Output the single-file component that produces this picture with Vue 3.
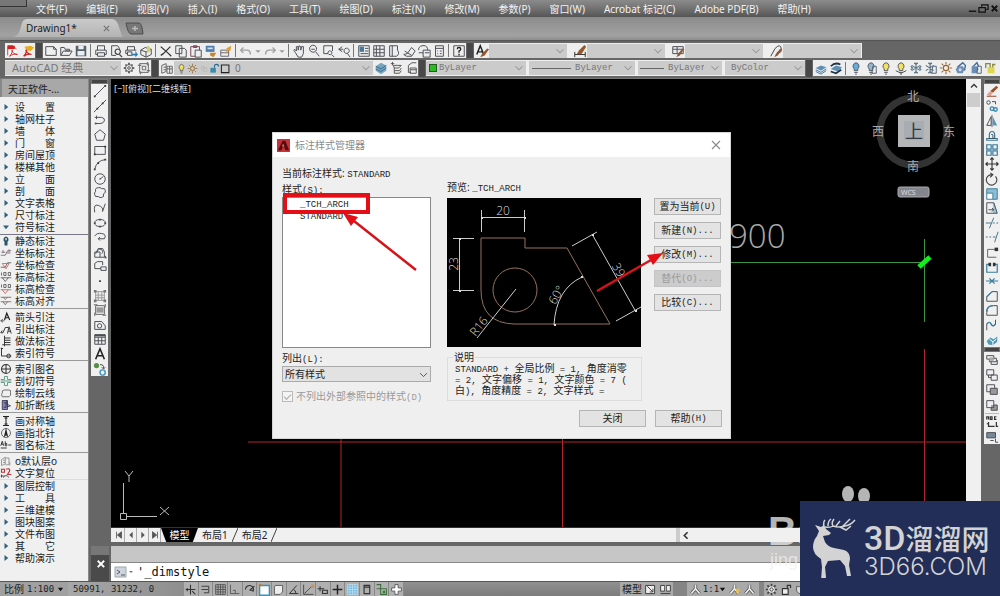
<script setup>
import { ref } from 'vue'

const s = (d, c = '#4a4f55', w = 1.1) => `<path d="${d}" fill="none" stroke="${c}" stroke-width="${w}"/>`
const f = (d, c = '#4a4f55') => `<path d="${d}" fill="${c}"/>`
const bulb = (c, e = '#556') => f('M8 2a4 4 0 0 0-2 7v2h4V9a4 4 0 0 0-2-7z', c) + s('M8 2a4 4 0 0 0-2 7v2h4V9a4 4 0 0 0-2-7zM6 13h4M7 15h2', e)
const page = s('M10 6h4v8h-5z', '#567')
const layers = f('M2 8l6-3 6 2-6 4z', '#5d8fb5') + s('M2 10l6 3 6-4M2 12l6 3 6-4', '#44769c')
const sheets = s('M2 3h8v4H2zM5 7v3h8V6h-3M7 10v3h7V8')
const pencil = f('M13 5l2 1-5 7-4 2 2-4z', '#8c5a36')

const icons = {
  pdf: f('M2 2h6l4 4v8H2z', '#fff') + s('M2 13V2h6l4 4', '#c33') + f('M2 2h8v4H2z', '#c22') + s('M4 14c3-3 4-7 3-7s0 4 6 5c-3-1-6 0-9 2', '#c22'),
  pdfc: f('M4 3l7-1 4 2-4 4-5-1z', '#e9ac1c') + s('M3 14c3-3 4-7 3-7s0 4 6 5c-3-1-6 0-9 2', '#c22', 1.4),
  new: s('M2 13V3h9l3 3v7zM11 3v3h3'),
  open: s('M2 13V4h4l1 2h5v2M2 13l3-5h10l-3 5zM7 8h5'),
  save: f('M2 2h12v12H2z', '#56606a') + f('M5 2h6v4H5zM4 8h8v5H4z', '#e8eef4'),
  print: s('M4 7V2h8v5M4 12H2V7h12v5h-2M4 10h8v4H4z'),
  preview: s('M8 13H3V2h7l2 3v2') + s('M7 9a3 3 0 1 1 5 2 3 3 0 0 1-5-2M12 12l3 3', '#444', 1.4),
  plot: s('M4 7V3h8v4M4 11H2V7h12M4 9h5v4H4z') + f('M9 11h4V8l3 4-3 3v-2H9z', '#2b7fb2'),
  globe: s('M2 7l5-3 7 2v6l-6 3-6-3zM2 7l6 2 6-3M8 9v6') + f('M9 2a4 4 0 1 1 0 8z', '#d5cf74'),
  cut: s('M2 3l9 8M13 3L5 11M2 13l3-2M11 11l3 3', '#333', 1.5),
  copy: s('M2 2h7v9H2zM6 5h6l2 2v8H6z'),
  paste: s('M2 3h10v11H2zM5 2h4v2H5z', '#745') + f('M7 7h7v8H7z', '#eee') + s('M7 7h7v8H7z'),
  match: f('M2 2h10v7H2z', '#4f7dac') + f('M4 4h6v2H4z', '#cde') + f('M7 10h7l-3 5-4-2z', '#c8872f'),
  edit: s('M2 7h9v7H2zM2 10h9', '#667') + f('M8 5l6-3-1 6-2-1-3 4-1-1 3-4z', '#dda02c'),
  undo: s('M5 4L2 7l3 3M2 7h7q4 0 4 5', '#a2a2a2', 1.6),
  redo: s('M11 4l3 3-3 3M14 7H7q-4 0-4 5', '#a2a2a2', 1.6),
  caret: f('M5 7h6l-3 3z', '#999'),
  pan: s('M4 10L2 7l1-1 2 2V3l2 0v4l1-5 2 1v4l1-4h2v8l-2 4H7z'),
  zoom: s('M3 6a4 4 0 1 1 7 2 4 4 0 0 1-7-2M10 9l4 5M5 6h4'),
  zoomwin: s('M2 2h10v6M2 2v9h5M7 9a2 2 0 1 1 4 2 2 2 0 0 1-4-2M11 12l3 3'),
  zoomprev: s('M6 3L2 6l4 3M2 6h5M8 8a3 3 0 1 1 5 2 3 3 0 0 1-5-2M12 11l3 4'),
  props: s('M2 2h12v12H2zM9 5h4M9 8h4M4 11h9') + f('M3 3h5v6H3z', '#49789f'),
  design: s('M2 2h12v12H2zM5 2v12M9 2v12M2 6h12M2 10h12'),
  palette: s('M3 2h9v5M3 2v12h5M6 2v12M12 7q3 4-1 7H8'),
  markup: s('M2 12l4-1 5-7 4 4-4 6H5zM3 8l8 5'),
  sheet: s('M2 7a5 4 0 0 1 10-2v2M7 7h8v8H7zM2 10h5M9 10h5'),
  calc: s('M4 2h9v12H4zM4 5h9M6 8h1M9 8h2M6 11h1M9 11h2'),
  help: s('M2 2h12v12H2z') + s('M6 6q0-2 2-2t2 2q0 1-2 2v2M8 11v2', '#222', 1.5),
  textstyle: s('M2 12L6 2l4 10M3 9h6', '#222', 1.7) + f('M14 5l2 1-5 7-5 2 2-4z', '#94582c'),
  dimstyle: s('M2 12h12M2 9v6M14 9v6', '#333') + f('M13 1l2 2-5 8-6 1 3-5z', '#94582c'),
  tablestyle: s('M2 3h12v8H2zM2 6h12M7 3v8') + pencil,
  mleader: s('M2 14l5-9q6-6 7 0t-5 5', '#444') + pencil,
  gear: s('M8 2v2M8 12v2M2 8h2M12 8h2M4 4l1 1M11 11l1 1M12 4l-1 1M5 11l-1 1', '#555', 2) + s('M4 8a4 4 0 1 1 8 0 4 4 0 0 1-8 0M6.500 8a1.500 1.500 0 1 1 3 0 1.500 1.500 0 0 1-3 0', '#555'),
  wsave: s('M3 3h10v10H3zM6 6h4v4H6z', '#666') + s('M1 5h4M11 11h4M12 1v4M4 12v3', '#777', 1.6),
  layerprop: s('M2 5l5-2v9l-5 2zM4 7h3M4 10h3M8 6h6v8H8zM8 9h6M11 6v8', '#666'),
  bulb: bulb('#f3e25d'), bulbblue: bulb('#61aedb'), bulbgrey: bulb('#8fb8d0') + page,
  bulblayer: bulb('#f3e25d') + s('M2 11l6 3 6-3'),
  sun: s('M8 1v3M8 12v3M1 8h3M12 8h3M3 3l2 2M11 11l2 2M13 3l-2 2M5 11l-2 2', '#987443', 1.3) + s('M5 8a3 3 0 1 1 6 0 3 3 0 0 1-6 0', '#98642c', 1.3),
  freeze: s('M5 5h4v4H5zM8 7h5v5H8z', '#b9b9b9'),
  snow: s('M8 2v12M3 5l10 6M13 5L3 11M6 2l2 2 2-2M6 14l2-2 2 2M2 6l2 2-2 2M14 6l-2 2 2 2', '#567083', 1.3),
  snowpage: s('M7 2v12M2 5l9 6M11 5L2 11M5 2l2 2 2-2M5 14l2-2 2 2', '#567083', 1.3) + page,
  lockopen: f('M2 7h8v7H2z', '#3c89ae') + s('M8 7V4q0-2 3-2t3 3', '#286c91', 1.6),
  lock: s('M4 7l6-5 3 3-1 6', '#446a94', 1.6) + f('M4 6h6l2 3-2 5H4L2 10z', '#6c8eb5') + s('M6 9h2v2H6z', '#eef'),
  lockpage: s('M4 7l5-5 2 4', '#446a94', 1.6) + f('M3 6h6l2 3-2 5H3z', '#6c8eb5') + page,
  lockyellow: f('M4 7h8v7H4z', '#ded74f') + s('M2 8V3h5v4M10 7V4h3', '#898635', 1.5),
  square: s('M2 3h11v11H2z', '#222', 1.5),
  layers: layers,
  laystack: f('M2 6l6-4 6 3v6l-6 4-6-4z', '#78a6c0') + s('M2 6l6 3 6-4M2 9l6 3 6-4', '#356c8e'),
  laymatch: s('M2 3h4M4 1v4M5 5h9l-3 3H6zM6 8v3h6l2-3M6 11v3h6l2-3', '#555'),
  layprev: s('M5 5l4-3h5M5 5v8h3M7 8h7v6H7zM7 10h7', '#555'),
  laydark: f('M2 9l6-4 7 2-5 5z', '#5d8fb5') + s('M2 6q5-5 11-2M2 12l6 2 6-4', '#234', 2),
  line: s('M2 14L14 2') + f('M1 13h2v2H1zM13 1h2v2h-2z', '#333'),
  xline: s('M1 15L15 1') + f('M4 10h2v2H4zM10 4h2v2h-2z', '#333'),
  pline: s('M2 5h8q4 1 3 4t-5 3H3M4 3v4') + f('M2 11h2v2H2z'),
  polygon: s('M8 2l6 5-2 7H4L2 7z'),
  rect: s('M2 4h12v9H2z') + f('M1 12h2v2H1zM13 3h2v2h-2z', '#333'),
  arc: s('M2 14Q4 4 14 3') + f('M1 13h2v2H1zM5 6h2v2H5zM13 2h2v2h-2z', '#333'),
  circle: s('M2 8a6 6 0 1 1 12 0 6 6 0 0 1-12 0M8 8l4-3M7 8h2'),
  cloud: s('M3 6q-1-4 3-4 2-1 4 1 4-1 4 2 1 3-2 4 1 4-2 4-2 1-4-1-4 1-4-2-1-2 1-4z'),
  spline: s('M2 13Q0 3 6 5t5 6 3-8'),
  ellipse: s('M2 8q0-4 6-4t6 4-6 4-6-4') + f('M7 3h2v2H7zM7 11h2v2H7zM1 7h2v2H1zM13 7h2v2h-2z'),
  earc: s('M2 7q2-4 8-3t3 6H6M8 8l-2 2 2 2'),
  insert: s('M3 10l3-6h5l2 4v6H8M2 8v6h6V8zM5 8a3 3 0 1 1 5 2') + f('M14 12l2 3h-3z'),
  block: s('M2 11V5l3-2h6v4M2 11h7M9 9h6v4H9z'),
  point: f('M7 7h2v2H7z', '#333'),
  hatch: s('M3 3h10v10H3zM3 7h10M3 10h10M6 3v10M10 3v10', '#999') + f('M1 1h3v3H1zM12 1h3v3h-3zM1 12h3v3H1zM12 12h3v3h-3z', '#777'),
  gradient: f('M4 5h8v6H4z', '#999') + s('M3 3h10v10H3zM1 2h4M11 14h4M2 11v4M14 1v4', '#666'),
  region: s('M2 13V4h8l4 5v4zM5 9a2 2 0 1 1 5 0 2 2 0 0 1-5 0'),
  table: s('M2 3h12v11H2zM2 6h12M2 10h12M6 6v8M10 6v8') + f('M2 3h12v2H2z'),
  mtext: s('M3 14L8 2l5 12M5 10h6', '#222', 1.8),
  addsel: f('M1 4a3 3 0 1 1 6 0 3 3 0 0 1-6 0', '#578e47') + s('M8 3q5 0 4 4M10 6l2 2 2-2', '#444') + s('M8 12a3 3 0 1 1 6 0 3 3 0 0 1-6 0', '#4796bd', 1.7),
  erase: f('M13 2l2 2-6 6-3-2z', '#94532e') + f('M6 8l3 2-3 4-4-2z', '#dfa398') + s('M2 14h11', '#9a3f2e'),
  copy2: s('M2 4a2 2 0 1 1 4 0 2 2 0 0 1-4 0M8 3h4v3') + s('M6 11a2 2 0 1 1 4 0 2 2 0 0 1-4 0M10 12a2 2 0 1 1 4 0 2 2 0 0 1-4 0', '#3987ae', 1.5),
  mirror: s('M7 3v10H2z') + f('M9 3v10h5z', '#589ab7') + s('M8 1v14', '#567'),
  offset: s('M2 12h3V8q0-4 3-4t3 4v4h3v2H2z', '#397e9f', 1.4) + s('M4 12h8M7 8q1-2 2 0v4'),
  array: s('M2 2h5v5H2zM9 2h5v5H9zM2 9h5v5H2zM9 9h5v5H9z', '#397e9f', 1.4),
  move: s('M8 1v14M1 8h14M6 3l2-2 2 2M6 13l2 2 2-2M3 6L1 8l2 2M13 6l2 2-2 2', '#333', 1.3),
  rotate: s('M8 3a6 6 0 1 0 4 2M6 1l3 2-3 3', '#444', 1.3),
  scale: f('M2 2h12v12H2z', '#8dbdd2') + f('M2 7h7v7H2z', '#fff') + s('M2 2h12v12H2zM2 7h7v7', '#397e9f'),
  stretch: f('M9 2h2l3 12H9z', '#9cc7d9') + s('M2 2h8l4 12H2zM4 10h6M8 8l2 2-2 2'),
  trim: s('M1 8h6M9 8h2M13 8h2M5 14l5-12', '#467389'),
  extend: s('M1 8h2M5 8h2M9 8h3M11 14l4-12', '#467389'),
  breakpt: s('M13 5H3v9h10', '#567') + f('M11 3h4v4h-4z', '#333'),
  break: s('M5 5H2v9h12V5h-3', '#397e9f', 1.4) + f('M4 3h3v4H4zM9 3h3v4H9z', '#333'),
  join: s('M1 8h14M5 5l3 3-3 3M11 5L8 8l3 3', '#397e9f', 1.4),
  chamfer: s('M2 14V9l6-6h6v11z') + s('M2 9l6-6', '#397e9f', 1.6),
  fillet: s('M2 14v-3q0-8 8-8h4v11z') + s('M2 10q0-7 7-7', '#397e9f', 1.6),
  blend: s('M2 14V7q3-4 5 0t5 0V2') + s('M2 7q3-4 5 0t5 0', '#397e9f', 1.6),
  explode: f('M2 9l4-4 4 2 4-3 0 6-5 4-5-1z', '#4e9bb8') + s('M5 7l4 3 4-3M9 10v4', '#fff'),
  order1: sheets + f('M5 5h5v4H5z', '#aaa'),
  order2: s('M2 2h8v6H2zM7 8h7v6H7zM4 8v3h3'),
  order3: s('M2 2h9v8H2z') + f('M6 6h8v7H6z', '#999') + s('M6 6h8v7H6z'),
  order4: f('M7 8h7v6H7z', '#999') + s('M2 3h8v8H2zM10 8h4v6H7v-3'),
  abc: s('M2 5V2h2v3M6 2h2v3H6zM13 2h-2v3h2M4 8v5h7M4 10H2M13 8v5h2', '#333', 1.4),
  orderh: f('M2 3h10v6H2z', '#789') + s('M2 3h10v6H2zM6 12h4M12 10v4h3'),
  light: f('M8 2a4 4 0 0 0-2 7v5h4V9a4 4 0 0 0-2-7z', '#275565') + f('M7 4h2v3H7z', '#cde'),
  coord: s('M1 11h6l3-6h5M2 7h5M4 4v4M9 8h5M12 3v4', '#78636e'),
  coordr: s('M1 11h6l3-6h5', '#556') + s('M3 6h9l-4 7z', '#c86259'),
  level: s('M2 2v4M5 2h3v4H5zM11 2h3v4h-3zM1 9h14M3 9l4 5 4-5', '#555'),
  levelr: s('M2 2v4M5 2h3v4H5zM11 2h3v4h-3z', '#555') + s('M1 9h14M3 9l4 5 4-5', '#b46257'),
  levela: s('M1 3h14M4 3l3 3 3-3M1 9h14M4 9l3 4 3-4', '#775f59'),
  arrowA: s('M1 13h5M4 11l-3 2 3 2') + s('M6 12l3-9 4 9M7 9h5', '#222', 1.6),
  lead: s('M1 13h3l3-7h4M3 10l-2 3M10 14l2-9 3 9M11 11h3', '#333', 1.3),
  method: s('M6 1v14M6 4h8M6 7h8M6 10h8M3 13h11', '#333', 1.3),
  indexs: s('M2 1v11h7M1 2h3M9 12a2 2 0 1 1 5 0 2 2 0 0 1-5 0M9 12h6', '#333', 1.3),
  indexn: s('M2 8a6 6 0 1 1 12 0 6 6 0 0 1-12 0M8 2v12M2 8h12', '#333', 1.4),
  section: s('M1 6h5V2h4v4h5M1 10h5v4h4v-4h5M1 8h14', '#4d8d77'),
  rcloud: s('M3 13q-2-3 0-5-1-4 3-4h6q3 0 2 3 1 5-2 6z', '#555'),
  breakl: f('M3 2h7v12H3z', '#8486b8') + s('M3 2h7v12H3zM9 2v5l5 2-5 2M5 5h3v6H5', '#334'),
  axis: s('M4 2h8M8 2v12M4 14h8M6 4h4M6 12h4', '#222', 1.4),
  north: s('M2 8a6 6 0 1 1 12 0 6 6 0 0 1-12 0') + f('M8 1l3 13-3-3-3 3z', '#222'),
  imgname: s('M1 9l2-6 2 6M2 7h2M7 3v6h2V6H7M1 12h8M11 8h4', '#333', 1.3),
  deflayer: s('M2 6l5-3v9l-5 2zM7 4h5v9H7M4 7h3M4 10h3M13 9v5', '#888'),
  reset: s('M2 3h4v4H2zM8 3q5-2 5 2l-3 5h5', '#b33', 1.5) + s('M1 12h5M2 10v4M4 14q4-5 8 0', '#333'),
  infer: s('M8 2v12M2 8h12M4 6v4M10 10l4 4', '#333', 1.3),
  snap: s('M3 4h9v8H6M3 8h8', '#333'),
  grid: s('M2 2h12v12H2zM5 2v12M8 2v12M11 2v12M2 5h12M2 8h12M2 11h12', '#444', 0.9),
  ortho: s('M3 2v11h11M6 9h3v4', '#555'),
  polar: s('M3 8a5 5 0 1 1 9 3M8 9l6-5M8 9h5', '#333', 1.3),
  osnap: f('M2 3h12v12H2z', '#fff') + s('M2 3h12v12H2z', '#3b93b5', 1.7) + f('M1 1h3v3H1z', '#c72'),
  osnap3: f('M4 3h9v8l-3 3H3V5z', '#eee') + s('M4 3h9v8l-3 3H3V5z', '#555'),
  angle: s('M12 3L3 13h11M8 8q3 1 3 5', '#333', 1.2),
  ducs: s('M2 2v12h12M3 13L12 4', '#444') + f('M11 2h4v4h-4z', '#d7903d'),
  dyn: s('M2 7h8M5 4v6M8 9h6v4H8z', '#333', 1.3),
  lwt: s('M2 8h12M8 2v12', '#222', 1.8),
  tpy: f('M2 2h12v12H2z', '#73b8df') + s('M2 2h12v12H2zM5 2v12M8 2v12M11 2v12M2 5h12M2 8h12M2 11h12', '#c4e6f8', 0.8),
  qp: s('M5 3h7v10H5zM5 5h7', '#333', 1.4),
  sc: f('M8 8h6v6H8z', '#b6dcae') + s('M2 2h5v5H2M7 7h7v7H7zM10 10h2v2h-2z', '#3e6b3e', 1.3),
  am: f('M6 2h4v4h4v4h-4v4H6v-4H2V6h4z', '#fff') + s('M6 2h4v4h4v4h-4v4H6v-4H2V6h4z', '#555'),
  model: f('M2 3h11v10H2z', '#eee') + s('M2 3h11v10H2zM4 4l7 7M11 7v4H7', '#333'),
  layout: f('M2 3h12v7H2z', '#eee') + s('M2 3h5v7H2zM9 3h5v7H9zM2 13h12', '#333'),
  anno: s('M8 2v5L3 13M8 7l5 6', '#555', 4) + s('M8 2v5L3 13M8 7l5 6', '#eee', 2),
  annoy: s('M8 2v5L3 13M8 7l5 6', '#666', 4) + s('M8 2v5L3 13M8 7l5 6', '#eee', 2) + f('M10 7h4v5h-4z', '#e5c04d'),
  lockst: f('M3 7h7v7H3z', '#eee') + s('M3 7h7v7H3zM9 7V3h4v3', '#333', 1.4),
  gearw: s('M8 1v14M1 8h14M3 3l10 10M13 3L3 13', '#444', 2) + f('M4 8a4 4 0 1 1 8 0 4 4 0 0 1-8 0', '#eee') + s('M6 8a2 2 0 1 1 4 0 2 2 0 0 1-4 0', '#333'),
  globew: f('M2 4q8 2 11-2v8q-6 7-11 0z', '#ddd') + s('M2 4q8 2 11-2v8q-6 7-11 0z', '#555'),
  chev: s('M4 6l4 4 4-4', '#969696', 1.2),
  chevdark: s('M3 6l5 5 5-5', '#444', 1.3),
  chevup: s('M4 10l4-4 4 4', '#333', 1.7),
  close: s('M4 4l8 8M12 4l-8 8', '#8a8a8a', 1.1),
  tri: f('M6 4l5 4-5 4z', '#31617c'), trid: f('M4 6h8l-4 5z', '#31617c')
}

const menus = ['文件(F)', '编辑(E)', '视图(V)', '插入(I)', '格式(O)', '工具(T)', '绘图(D)', '标注(N)', '修改(M)', '参数(P)', '窗口(W)', 'Acrobat 标记(C)', 'Adobe PDF(B)', '帮助(H)']
const stdBar = ['new', 'open', 'save', '|', 'print', 'preview', 'plot', 'globe', '|', 'cut', 'copy', 'paste', 'match', 'edit', '|', 'undo', 'caret', 'redo', 'caret', '|', 'pan', 'zoom', 'zoomwin', 'zoomprev', '|', 'props', 'design', 'palette', 'markup', 'sheet', 'calc', '|', 'help']
const styleBar = ['textstyle', 'dimstyle', 'tablestyle', 'mleader']
const layerBar = ['layers', 'laydark', '|', 'bulbblue', 'bulbgrey', 'bulb', 'bulblayer', 'snow', 'snowpage', 'sun', 'lock', 'lockpage', 'lockyellow']
const drawBar = ['line', 'xline', 'pline', 'polygon', 'rect', 'arc', 'circle', 'cloud', 'spline', 'ellipse', 'earc', 'insert', 'block', 'point', 'hatch', 'gradient', 'region', 'table', 'mtext', 'addsel']
const modifyBar = ['erase', 'copy2', 'mirror', 'offset', 'array', 'move', 'rotate', 'scale', 'stretch', 'trim', 'extend', 'breakpt', 'break', 'join', 'chamfer', 'fillet', 'blend', 'explode']
const orderBar = ['order1', 'order2', 'order3', 'order4', '|', 'abc', 'orderh']
const statusBar = ['infer', 'snap', 'grid', 'ortho', 'polar', 'osnap', 'osnap3', 'angle', 'ducs', 'dyn', 'lwt', 'tpy', 'qp', 'sc', 'am']
const groups = [
  [['tri', '设　　置'], ['tri', '轴网柱子'], ['tri', '墙　　体'], ['tri', '门　　窗'], ['tri', '房间屋顶'], ['tri', '楼梯其他'], ['tri', '立　　面'], ['tri', '剖　　面'], ['tri', '文字表格'], ['tri', '尺寸标注'], ['trid', '符号标注']],
  [['light', '静态标注'], ['coord', '坐标标注'], ['coordr', '坐标检查'], ['level', '标高标注'], ['levelr', '标高检查'], ['levela', '标高对齐']],
  [['arrowA', '箭头引注'], ['lead', '引出标注'], ['method', '做法标注'], ['indexs', '索引符号']],
  [['indexn', '索引图名'], ['section', '剖切符号'], ['rcloud', '绘制云线'], ['breakl', '加折断线']],
  [['axis', '画对称轴'], ['north', '画指北针'], ['imgname', '图名标注']],
  [['deflayer', 'o默认层o'], ['reset', '文字复位']],
  [['tri', '图层控制'], ['tri', '工　　具'], ['tri', '三维建模'], ['tri', '图块图案'], ['tri', '文件布图'], ['tri', '其　　它'], ['tri', '帮助演示']]
]
const sideButtons = [['置为当前', '(U)'], ['新建', '(N)...'], ['修改', '(M)...'], ['替代', '(O)...'], ['比较', '(C)...']]
const picked = ref('')
const command = ref("'_dimstyle")
</script>

<template>
  <div class="app">
    <nav class="menubar">
      <span class="appbtn"></span>
      <a v-for="m in menus" :key="m" href="#">{{ m }}</a>
      <div class="winctl">
        <button aria-label="最小化"><svg viewBox="0 0 12 12"><path d="M2 9h8" stroke="#111" stroke-width="1.500" /></svg></button>
        <button aria-label="还原"><svg viewBox="0 0 12 12"><path d="M4 4V2h7v5H9M1 5h7v5H1z" fill="none" stroke="#111" stroke-width="1.300" /></svg></button>
        <button aria-label="关闭窗口"><svg viewBox="0 0 12 12"><path d="M3 3l6 6M9 3L3 9" stroke="#111" stroke-width="2" /></svg></button>
      </div>
    </nav>

    <div class="doctabs">
      <button class="doctab">
        <svg class="shape" viewBox="0 0 110 18" preserveAspectRatio="none"><defs><linearGradient id="tg" x2="0" y2="1"><stop stop-color="#cacaca" /><stop offset="1" stop-color="#b4b4b4" /></linearGradient></defs><path d="M0 18Q5 17 7 11L9 4Q10 0 15 0H98Q103 0 105 5L108 14Q109 18 110 18z" fill="url(#tg)" /></svg>
        <span>Drawing1*</span>
        <svg class="x" viewBox="0 0 8 8"><path d="M1 1l6 6M7 1L1 7" stroke="#777" stroke-width="1.500" /></svg>
      </button>
      <button class="addtab" aria-label="新建图形"><svg viewBox="0 0 19 13"><path d="M1 1h13q3 0 4 11H6Q3 12 1 1z" fill="#777" stroke="#4d4d4d" /><path d="M10 4v5M7 6.500h6" stroke="#bbb" stroke-width="1.500" /></svg></button>
    </div>

    <div class="toolrow">
      <div class="strip"><button v-for="n in ['pdf', 'pdfc']" :key="n" :aria-label="n"><svg class="ic" viewBox="0 0 16 16" v-html="icons[n]" /></button></div>
      <i class="grip"></i>
      <div class="strip std">
        <template v-for="(n, i) in stdBar" :key="i">
          <i v-if="n === '|'" class="sep"></i>
          <button v-else :class="{ narrow: n === 'caret' }" :aria-label="n"><svg class="ic" viewBox="0 0 16 16" v-html="icons[n]" /></button>
        </template>
      </div>
      <i class="grip"></i>
      <div class="strip">
        <template v-for="n in styleBar" :key="n">
          <button :aria-label="n"><svg class="ic" viewBox="0 0 16 16" v-html="icons[n]" /></button>
          <div class="combo style"><select :aria-label="n + ' 样式'"><option></option></select><svg class="ic" viewBox="0 0 16 16" v-html="icons.chev" /></div>
        </template>
      </div>
    </div>

    <div class="toolrow second">
      <div class="strip">
        <div class="combo work"><select aria-label="工作空间"><option>AutoCAD 经典</option></select><svg class="ic" viewBox="0 0 16 16" v-html="icons.chev" /></div>
        <button v-for="n in ['gear', 'wsave']" :key="n" :aria-label="n"><svg class="ic" viewBox="0 0 16 16" v-html="icons[n]" /></button>
      </div>
      <i class="grip"></i>
      <div class="strip">
        <button aria-label="图层特性"><svg class="ic" viewBox="0 0 16 16" v-html="icons.layerprop" /></button>
        <div class="combo layer">
          <svg v-for="n in ['bulb', 'sun', 'freeze', 'lockopen', 'square']" :key="n" class="small" viewBox="0 0 16 16" v-html="icons[n]" />
          <select aria-label="图层"><option>0</option></select><svg class="ic" viewBox="0 0 16 16" v-html="icons.chev" />
        </div>
        <button v-for="n in ['laystack', 'laymatch', 'layprev']" :key="n" :aria-label="n"><svg class="ic" viewBox="0 0 16 16" v-html="icons[n]" /></button>
      </div>
      <i class="grip"></i>
      <div class="strip prop">
        <div class="combo bycol"><span class="green"></span><select aria-label="颜色"><option>ByLayer</option></select><svg class="ic" viewBox="0 0 16 16" v-html="icons.chev" /></div>
        <div class="combo ltype"><span class="rule"></span><select aria-label="线型"><option>ByLayer</option></select><svg class="ic" viewBox="0 0 16 16" v-html="icons.chev" /></div>
        <div class="combo lw"><span class="rule short"></span><select aria-label="线宽"><option>ByLayer</option></select><svg class="ic" viewBox="0 0 16 16" v-html="icons.chev" /></div>
        <div class="combo pstyle"><select aria-label="打印样式"><option>ByColor</option></select><svg class="ic" viewBox="0 0 16 16" v-html="icons.chev" /></div>
      </div>
      <i class="grip"></i>
      <div class="strip last">
        <template v-for="(n, i) in layerBar" :key="i">
          <i v-if="n === '|'" class="sep"></i>
          <button v-else :aria-label="n"><svg class="ic" viewBox="0 0 16 16" v-html="icons[n]" /></button>
        </template>
      </div>
    </div>

    <div class="work-area">
      <aside class="side">
        <h2>天正软件-...</h2>
        <div class="sidelist">
          <ul v-for="(g, i) in groups" :key="i">
            <li v-for="it in g" :key="it[1]"><a href="#"><svg viewBox="0 0 16 16" v-html="icons[it[0]]" /><span>{{ it[1] }}</span></a></li>
          </ul>
        </div>
      </aside>

      <div class="main">
        <div class="upper">
          <div class="vbar draw">
            <i class="hgrip"></i>
            <div class="cells twenty"><button v-for="n in drawBar" :key="n" :aria-label="n"><svg class="ic" viewBox="0 0 16 16" v-html="icons[n]" /></button></div>
          </div>

          <div class="center">
            <div class="view">
              <div class="canvas">
                <svg class="drawing" viewBox="111 79 855 448" preserveAspectRatio="xMinYMin meet">
                  <text x="114" y="92" class="vlabel">[−][俯视][二维线框]</text>
                  <g stroke="#b0262c" fill="none"><path d="M248 442H966M341 430V527M562.500 430V527M924.500 349V527" /></g>
                  <path d="M700 262.500H924M924.500 239V322" stroke="#3c9440" />
                  <path d="M919 267l11-10" stroke="#11f01c" stroke-width="5" />
                  <text x="729" y="248" class="big">900</text>
                  <g stroke="#bbb" fill="none"><path d="M123.500 483V513M127 516.500H157M120.500 513.500h6v6h-6zM125 471l4 5 4-5M129 476v6M160 507l9 8M169 507l-9 8" /></g>
                  <circle cx="913.500" cy="131.500" r="33.500" fill="none" stroke="#333" stroke-width="7" />
                  <path d="M898 115h32v32h-32z" fill="#b4b6b8" /><path d="M904 121h20v19h-20z" fill="#a7adb3" />
                  <g class="cube"><text x="913" y="101">北</text><text x="878" y="136">西</text><text x="949" y="136">东</text><text x="913" y="171">南</text></g>
                  <text x="914" y="138" class="up">上</text>
                  <rect x="898" y="187" width="31" height="10" rx="2" fill="#85858f" stroke="#aaa" />
                  <text x="901" y="195" class="wcs">WCS</text>
                </svg>

                <section class="dialog" role="dialog" aria-labelledby="dt">
                  <header>
                    <svg class="logo" viewBox="0 0 14 14"><path d="M0 0h14v14H0z" fill="#c5343a" /><path d="M1 12L6 2h3l4 10h-4l-1-3H6l-1 3z" fill="#5a0b10" /><path d="M6.500 5L8 8H5.500z" fill="#e88" /></svg>
                    <h1 id="dt">标注样式管理器</h1>
                    <button aria-label="关闭对话框"><svg viewBox="0 0 16 16" v-html="icons.close" /></button>
                  </header>
                  <div class="dbody">
                    <div class="col1">
                      <p>当前标注样式: <span class="m">STANDARD</span></p>
                      <label for="styles">样式<span class="m">(S):</span></label>
                      <select id="styles" v-model="picked" size="4"><option>_TCH_ARCH</option><option>STANDARD</option></select>
                      <label for="flt" class="lo">列出<span class="m">(L):</span></label>
                      <div class="filter"><select id="flt"><option>所有样式</option></select><svg viewBox="0 0 16 16" v-html="icons.chevdark" /></div>
                      <label class="chk"><input type="checkbox" checked disabled><span>不列出外部参照中的样式<span class="m">(D)</span></span></label>
                    </div>
                    <div class="col2">
                      <p>预览: <span class="m">_TCH_ARCH</span></p>
                      <svg class="preview" viewBox="447 198 194 149">
                        <path d="M447 198h194v149H447z" fill="#000" />
                        <g fill="none" stroke="#96705d"><path d="M481 238h44v10h42l43 76h-96q-33-1-33-34z" /><circle cx="515" cy="290" r="22" /></g>
                        <g fill="none" stroke="#ccc"><path d="M481 217.500h44M481.500 210v22M524.500 210v22M459.500 238v52M453 238.500h21M453 290.500h21M516 289l-39 49M592 234l44 78M572 246l25-14M616 321l25-14M582 277q-26 12-28 48" /></g>
                        <path d="M481 217h2v2h-2zM524 217h2v2h-2zM459 238h2v2h-2zM459 290h2v2h-2zM592 234h2v2h-2zM635 310h2v2h-2zM581 276h2v2h-2zM554 324h2v2h-2z" fill="#ddd" />
                        <g class="dim"><text x="503" y="215">20</text><text transform="translate(458 264) rotate(-90)">23</text><text transform="translate(560 297) rotate(-60)">60°</text><text transform="translate(615 272) rotate(60)">39</text><text transform="translate(482 329) rotate(-51)">R16</text></g>
                      </svg>
                      <fieldset><legend>说明</legend><p><span class="m">STANDARD + </span>全局比例<span class="m"> = 1, </span>角度消零<br><span class="m">= 2, </span>文字偏移<span class="m"> = 1, </span>文字颜色<span class="m"> = 7 (</span><br>白<span class="m">), </span>角度精度<span class="m"> = 2, </span>文字样式<span class="m"> =</span></p></fieldset>
                    </div>
                    <div class="col3"><button v-for="(b, i) in sideButtons" :key="i" :disabled="i === 3">{{ b[0] }}<span class="m">{{ b[1] }}</span></button></div>
                  </div>
                  <footer><button>关闭</button><button>帮助<span class="m">(H)</span></button></footer>
                </section>

                <svg class="marks" viewBox="111 79 855 448" preserveAspectRatio="xMinYMin meet">
                  <path d="M285 195h83v17h-83z" fill="none" stroke="#e30e16" stroke-width="4" />
                  <path d="M416 270l-62-49M597 291l54-31" stroke="#d5141a" stroke-width="2.500" />
                  <path d="M343 213l15 4-7 9zM663 253l-10 12-6-10z" fill="#e30e16" />
                </svg>
              </div>
              <div class="vscroll"><button aria-label="向上滚动"><svg viewBox="0 0 16 16" v-html="icons.chevup" /></button><i></i></div>
            </div>
            <div class="layouts">
              <div class="navs">
                <button aria-label="第一个"><svg viewBox="0 0 12 12"><path d="M3 2v8M9 2v8L4 6z" fill="#555" stroke="#555" /></svg></button>
                <button aria-label="上一个"><svg viewBox="0 0 12 12"><path d="M8 2v8L4 6z" fill="#555" /></svg></button>
                <button aria-label="下一个"><svg viewBox="0 0 12 12"><path d="M4 2v8l4-4z" fill="#555" /></svg></button>
                <button aria-label="最后一个"><svg viewBox="0 0 12 12"><path d="M9 2v8M3 2v8l5-4z" fill="#555" stroke="#555" /></svg></button>
              </div>
              <button class="ltab on">模型</button>
              <button class="ltab">布局1</button><svg class="slash" viewBox="0 0 6 14"><path d="M0 14L6 0" stroke="#444" /></svg>
              <button class="ltab">布局2</button><svg class="slash" viewBox="0 0 6 14"><path d="M0 14L6 0" stroke="#444" /></svg>
              <div class="hscroll"><button aria-label="向左滚动"><svg viewBox="0 0 12 12"><path d="M7 3L4 6l3 3" fill="none" stroke="#333" stroke-width="1.500" /></svg></button></div>
            </div>
          </div>

          <div class="vbar modify">
            <i class="hgrip"></i>
            <div class="cells eighteen"><button v-for="n in modifyBar" :key="n" :aria-label="n"><svg class="ic" viewBox="0 0 16 16" v-html="icons[n]" /></button></div>
            <i class="hgrip"></i>
            <div class="cells order">
              <template v-for="n in orderBar" :key="n"><i v-if="n === '|'" class="hsep"></i><button v-else :aria-label="n"><svg class="ic" viewBox="0 0 16 16" v-html="icons[n]" /></button></template>
            </div>
          </div>
        </div>

        <div class="command">
          <div class="handle"><i></i><button aria-label="关闭命令行"><svg viewBox="0 0 12 12"><path d="M3 3l7 7M10 3L3 10" stroke="#fff" stroke-width="2" /></svg></button></div>
          <div class="cmdbox">
            <div class="hist"></div>
            <label class="cmdline">
              <svg viewBox="0 0 20 12"><path d="M1 1h11v10H1z" fill="#cfd4dc" stroke="#9aa" /><path d="M3 4l3 2-3 2M7 9h4" fill="none" stroke="#556" /><path d="M15 5h4l-2 2z" fill="#777" /></svg>
              <input v-model="command" aria-label="命令">
            </label>
          </div>
        </div>
      </div>
    </div>

    <footer class="status">
      <button class="ratio">比例 <span>1:100</span><svg viewBox="0 0 8 8"><path d="M1 2h6L4 6z" fill="#111" /></svg></button>
      <span class="coords">50991, 31232, 0</span>
      <div class="sticons"><button v-for="n in statusBar" :key="n" :aria-label="n"><svg class="ic" viewBox="0 0 16 16" v-html="icons[n]" /></button></div>
      <div class="stright">
        <button class="txt">模型</button>
        <button v-for="n in ['model', 'layout']" :key="n" :aria-label="n"><svg class="ic" viewBox="0 0 16 16" v-html="icons[n]" /></button>
        <i class="gap"></i>
        <button class="scale"><svg class="ic" viewBox="0 0 16 16" v-html="icons.anno" /><span>1:1</span><svg class="tiny" viewBox="0 0 8 8"><path d="M1 2h6L4 6z" fill="#111" /></svg></button>
        <button v-for="n in ['annoy', 'anno']" :key="n" :aria-label="n"><svg class="ic" viewBox="0 0 16 16" v-html="icons[n]" /></button>
        <i class="gap small-gap"></i>
        <button v-for="n in ['gearw', 'lockst', 'globew']" :key="n" :aria-label="n"><svg class="ic" viewBox="0 0 16 16" v-html="icons[n]" /></button>
      </div>
    </footer>

    <div class="wm">
      <svg class="paw" viewBox="0 0 32 16"><ellipse cx="7" cy="8" rx="6" ry="8" fill="#b5b5b5" /><ellipse cx="23" cy="10" rx="6" ry="8" fill="#b5b5b5" /></svg>
      <b>Ba</b><span>jing</span>
    </div>
    <div class="brand">
      <svg class="deer" viewBox="0 0 46 60">
        <path d="M4 7l6 2 3-2 2 4 5 4-2 2-6 1 2 6q3 5 9 6l10 2q6 2 6 9l-1 6 2 11h-4l-2-10-5-6-12 1-3 6 1 10-1 4h-4l1-14-1-8Q2 36 2 29q0-6 4-11l2-5z" fill="#d3d3d3" />
        <path d="M13 9q-1-5 1-7M14 9q5 1 8-1 6 2 12 0 6-1 10-6M17 8q0-5 3-7M22 8q-2-3 1-7M25 8l4-5M31 9l5-5 3-3M29 9l6 3 5-4" fill="none" stroke="#d3d3d3" stroke-width="1.500" />
      </svg>
      <div class="names"><div class="n1"><span>3D</span>溜溜网</div><div class="n2">3D66.COM</div></div>
    </div>
  </div>
</template>

<style>
body { margin: 0; background: #666; }
</style>

<style scoped>
* { box-sizing: border-box; }
.app { position: relative; min-height: 100vh; display: flex; flex-direction: column; overflow: hidden; background: #666; color: #222; font: 10px/12px "Noto Sans", "Noto Sans CJK SC", sans-serif; }
button, select, input { font: inherit; color: inherit; margin: 0; padding: 0; border: 0; background: none; border-radius: 0; appearance: none; outline: 0; }
h1, h2, p, ul { margin: 0; padding: 0; font-weight: normal; font-size: 10px; list-style: none; }
a { color: inherit; text-decoration: none; }
button { display: flex; align-items: center; justify-content: center; flex: none; white-space: nowrap; }
svg { flex: none; display: block; }
.ic { width: 14px; height: 14px; }
.m { font-family: "Liberation Mono", monospace; font-size: 9px; line-height: 0; white-space: pre; }

.menubar { position: relative; height: 17px; display: flex; align-items: center; gap: 19px; padding-left: 36px; white-space: nowrap; color: #f2f2f2; background: linear-gradient(#8b8b8b, #777 40%, #555); }
.appbtn { position: absolute; left: 0; top: 0; width: 27px; height: 7px; background: #777; border: solid #333; border-width: 0 1px 1px 0; }
.winctl { margin-left: auto; display: flex; }
.winctl button { width: 11px; }
.winctl svg { width: 11px; height: 11px; }

.doctabs { height: 23px; display: flex; align-items: flex-end; padding: 0 0 3px 13px; background: linear-gradient(#8b8b8b, #a2a2a2 80%, #8e8e8e); }
.doctab { position: relative; width: 110px; height: 18px; justify-content: space-between; padding: 0 13px; }
.doctab span, .doctab .x { position: relative; }
.shape { position: absolute; left: 0; top: 0; width: 100%; height: 100%; }
.x { width: 7px; height: 7px; }
.addtab { padding: 0 0 2px 2px; }
.addtab svg { width: 19px; height: 13px; }

.toolrow { height: 18px; padding: 2px 0 0 5px; display: flex; gap: 1px; color: #777; border-top: 1px solid #555; }
.toolrow.second { height: 20px; padding-bottom: 1px; border-top: 0; }
.strip { display: flex; align-items: center; height: 15px; background: #eee; overflow: hidden; flex: none; }
.second .strip { height: 16px; }
.toolrow .strip button { width: 15px; height: 100%; }
.strip .narrow.narrow { width: 9px; }
.grip { width: 6px; height: 100%; background: #484848; flex: none; }
.sep { width: 1px; height: 13px; margin: 0 2px; background: #777; }
.combo { display: flex; align-items: center; height: 14px; background: #cbcbcb; }
.combo select { flex: 1; min-width: 0; height: 14px; line-height: 14px; }
.combo.style { width: 78px; margin-right: 5px; }
.combo.style:last-child { margin-right: 1px; }
.combo.work { width: 116px; padding-left: 7px; font-size: 11px; }
.combo.layer { width: 199px; padding-left: 2px; }
.small { width: 11px; height: 11px; }
.combo.layer select { padding-left: 4px; }
.strip.prop { gap: 3px; width: 379px; }
.prop .combo { font-family: "Liberation Mono", monospace; font-size: 9px; }
.combo.bycol { width: 100px; padding-left: 3px; gap: 2px; }
.green { width: 8px; height: 8px; background: #2bbb24; border: 1px solid #245b20; }
.combo.ltype { width: 106px; padding-left: 3px; gap: 4px; }
.rule { width: 39px; height: 1px; background: #666; }
.rule.short { width: 24px; }
.combo.lw { width: 84px; padding-left: 2px; gap: 4px; }
.combo.pstyle { flex: 1; padding-left: 6px; }
.strip.last { flex: 1; }

.work-area { flex: 1; display: flex; border-top: 1px solid #777; }
.side { width: 89px; flex: none; background: #f0f0f0; border-right: 1px solid #888; }
.side h2 { height: 18px; padding: 4px 0 0 6px; border-left: 2px solid #888; background: #a8a8a8; color: #222; }
.sidelist { padding-top: 4px; }
.side ul + ul { border-top: 1px solid #999; margin-top: 1px; padding-top: 2px; }
.side ul:nth-child(2) { padding-top: 0; border-color: #778; }
.side ul:last-child { border-color: #ddd; padding-top: 0; margin-top: 0; }
.side li a { display: flex; align-items: center; height: 12px; line-height: 12px; white-space: nowrap; }
.side li svg { width: 12px; height: 12px; margin: 0 3px 0 0; }

.main { flex: 1; min-width: 0; display: flex; flex-direction: column; }
.upper { flex: 1; display: flex; }
.vbar { flex: none; }
.draw { width: 22px; padding: 0 3px 0 2px; }
.modify { width: 19px; padding-left: 3px; }
.hgrip { display: block; height: 5px; background: #444; border: 1px solid #777; }
.cells { display: grid; grid-auto-rows: minmax(0, 1fr); justify-items: center; background: #f0f0f0; }
.cells.twenty { height: 292px; }
.cells.eighteen { height: 263px; }
.cells.order { grid-auto-rows: auto; height: 92px; align-content: space-around; }
.hsep { width: 14px; height: 1px; background: #bbb; }
.center { flex: 1; min-width: 0; display: flex; flex-direction: column; }
.view { flex: 1; display: flex; }
.canvas { position: relative; flex: 1; background: #000; overflow: hidden; }
.drawing, .marks { position: absolute; left: 0; top: 0; width: 855px; height: 448px; }
.marks { pointer-events: none; }
.vlabel { font: 9px "Noto Sans", "Noto Sans CJK SC", sans-serif; fill: #ddd; }
.big { font: 300 33px "Open Sans", sans-serif; fill: #aaa; }
.cube text { font: 12px "Noto Sans CJK SC", sans-serif; fill: #aaa; text-anchor: middle; }
.up { font: 18px "Noto Sans CJK SC", sans-serif; fill: #333b44; text-anchor: middle; }
.wcs { font: 7px "Noto Sans", sans-serif; fill: #ddd; }
.vscroll { width: 15px; background: #f0f0f0; }
.vscroll button { width: 15px; height: 14px; }
.vscroll svg { width: 12px; height: 12px; }
.vscroll i { display: block; width: 13px; height: 14px; margin: 0 1px; background: #cdcdcd; }

.layouts { height: 15px; display: flex; background: #f0f0f0; border-top: 1px solid #333; padding-left: 2px; margin-bottom: 4px; }
.navs { display: flex; }
.navs button { width: 12px; border-right: 1px solid #aaa; }
.navs svg { width: 10px; height: 10px; }
.ltab { padding: 0 4px; }
.ltab.on { background: #000; color: #fff; width: 37px; padding: 0; clip-path: polygon(0 0, 100% 0, 86% 100%, 14% 100%); }
.slash { width: 6px; height: 14px; }
.hscroll { margin-left: auto; width: 305px; border-left: 4px solid #ccc; display: flex; align-items: center; }
.hscroll svg { width: 13px; height: 13px; }

.command { height: 35px; display: flex; }
.handle { width: 18px; margin: 0 2px; background: #4a4a4a; }
.handle i { display: block; height: 9px; background: #777; }
.handle button { width: 18px; height: 16px; }
.handle svg { width: 11px; height: 11px; }
.cmdbox { flex: 1; background: #fff; }
.hist { height: 17px; background: #c6c6c6; border-bottom: 1px solid #888; }
.cmdline { display: flex; align-items: center; height: 17px; padding-left: 3px; gap: 3px; }
.cmdline svg { width: 20px; height: 12px; }
.cmdline input { flex: 1; font: 12px/16px "DejaVu Sans Mono", monospace; color: #111; }

.status { height: 15px; display: flex; align-items: center; background: linear-gradient(#909090, #7c7c7c); border-top: 1px solid #555; color: #222; }
.ratio { width: 68px; height: 14px; gap: 3px; justify-content: flex-start; padding-left: 4px; background: #a0a0a0; }
.ratio svg, .tiny { width: 7px; height: 7px; }
.ratio span, .coords, .scale span { font-family: "DejaVu Sans Mono", monospace; font-size: 9px; }
.coords { width: 116px; padding-left: 5px; height: 14px; line-height: 14px; background: linear-gradient(90deg, #a8a8a8, #8e8e8e); white-space: nowrap; }
.sticons { width: 220px; display: grid; grid-template-columns: repeat(15, minmax(0, 1fr)); background: #b0b0b0; }
.sticons button { border-right: 1px solid #888; height: 14px; }
.sticons .ic { width: 13px; height: 13px; }
.stright { display: flex; align-items: center; margin-left: auto; width: 380px; height: 14px; background: #aaa; }
.stright .txt { width: 22px; margin-left: 1px; }
.stright .ic { width: 13px; height: 13px; margin: 0 1px; }
.gap { width: 14px; height: 14px; background: #858585; }
.scale { width: 40px; }
.small-gap { width: 5px; margin: 0 0 0 2px; }

.dialog { position: absolute; left: 161px; top: 53px; width: 459px; background: #efefef; border: 1px solid #d5d5d5; padding-bottom: 11px; color: #222; }
.dialog header { height: 24px; display: flex; align-items: center; padding: 0 6px 0 4px; background: #fff; }
.logo { width: 13px; height: 13px; }
.dialog h1 { color: #8a8a8a; margin-left: 5px; flex: 1; }
.dialog header svg:not(.logo) { width: 16px; height: 16px; }
.dbody { display: flex; padding: 0 9px; }
.col1 { width: 149px; margin-right: 16px; padding-top: 8px; }
.col1 > p { line-height: 16px; white-space: nowrap; }
.col1 > label { display: block; line-height: 16px; }
#styles { display: block; width: 149px; height: 151px; padding-top: 2px; background: #fff; border: 1px solid #888; overflow: hidden; font: 9px/12px "Liberation Mono", monospace; }
#styles option { padding: 0 0 0 17px; min-height: 12px; line-height: 12px; }
.col1 .lo { margin-top: 2px; }
.filter { display: flex; align-items: center; height: 16px; background: #e2e2e2; border: 1px solid #aaa; }
.filter select { flex: 1; padding-left: 2px; height: 14px; }
.filter svg { width: 11px; height: 11px; margin-right: 1px; }
.col1 > .chk { display: flex; align-items: center; gap: 3px; height: 14px; margin-top: 7px; color: #999; line-height: 14px; white-space: nowrap; }
.chk input { width: 11px; height: 11px; border: 1px solid #bbb; background: #f4f4f4; display: grid; place-items: center; }
.chk input::before { content: ""; width: 6px; height: 3px; border: solid #aaa; border-width: 0 0 1px 1px; rotate: -45deg; }
.col2 { width: 195px; margin-right: 12px; padding-top: 23px; }
.col2 > p { line-height: 14px; margin-bottom: 4px; }
.preview { width: 194px; height: 149px; }
.dim text { font: 300 12px "Open Sans", sans-serif; fill: #ddd; text-anchor: middle; }
fieldset { margin: 4px 0 0; padding: 0 7px 3px; border: 1px solid #ddd; height: 50px; min-width: 0; }
legend { padding: 0 1px; margin-left: -2px; line-height: 12px; }
fieldset p { line-height: 11px; white-space: nowrap; }
.col3 { padding-top: 41px; display: flex; flex-direction: column; gap: 7px; }
.dialog .col3 button, .dialog footer button { width: 67px; height: 17px; background: #e3e3e3; border: 1px solid #b5b5b5; line-height: 15px; }
.dialog .col3 button:disabled { color: #999; background: #ccc; border-color: #c4c4c4; }
.dialog footer { display: flex; justify-content: flex-end; gap: 9px; padding: 7px 8px 0 0; }

.wm { position: absolute; left: 768px; bottom: 24px; display: flex; flex-direction: column; color: rgba(240, 240, 240, 0.75); }
.paw { position: absolute; left: 73px; top: -28px; width: 32px; height: 16px; }
.wm b { font: bold 40px/34px "Liberation Sans", sans-serif; }
.wm span { padding-left: 2px; font: 18px/24px "Liberation Sans", sans-serif; }
.brand { position: absolute; right: 0; bottom: 0; width: 200px; height: 95px; display: flex; background: #222e58; color: #d3d3d3; padding: 17px 0 0 11px; }
.deer { width: 46px; height: 60px; }
.names { margin-left: 7px; margin-top: 3px; white-space: nowrap; }
.n1 { display: flex; align-items: center; font: 500 28px/34px "Noto Sans CJK SC", sans-serif; }
.n1 span { font: 500 34px/34px Roboto, sans-serif; }
.n2 { font: 300 24px/24px Inter, sans-serif; }
</style>
